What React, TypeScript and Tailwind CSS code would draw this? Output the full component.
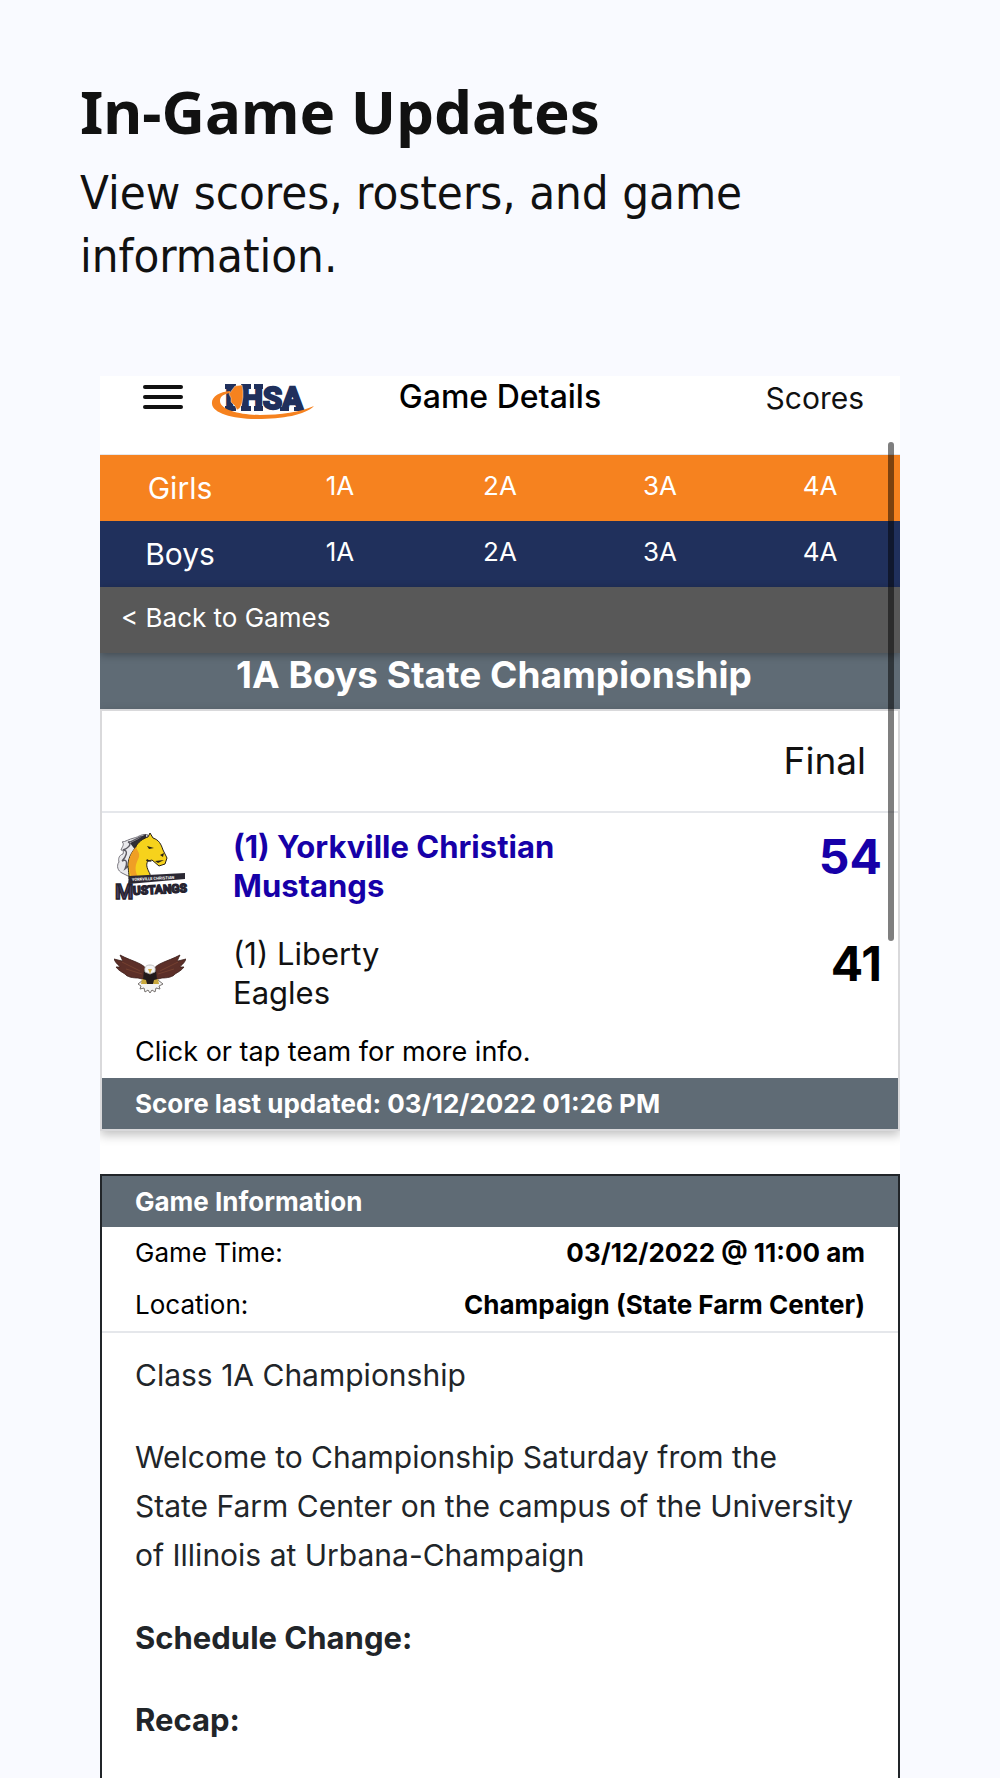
const divisions = ["1A", "2A", "3A", "4A"];

const leagues = [
  { name: "Girls", color: "bg-[#f6821f]" },
  { name: "Boys", color: "bg-[#20305c]" },
];

const gameInfo = [
  { label: "Game Time:", value: "03/12/2022 @ 11:00 am" },
  { label: "Location:", value: "Champaign (State Farm Center)" },
];

function IhsaLogo() {
  return (
    <svg viewBox="0 0 104 38" className="w-[104px] h-[38px] overflow-visible" role="img" aria-label="IHSA">
      <g
        fill="#20305c"
        stroke="#20305c"
        strokeWidth="2.4"
        fontSize="32"
        fontWeight="700"
        fontFamily="Roboto, sans-serif"
      >
        <text x="14" y="26">I</text>
        <text x="30" y="26" fontSize="31">
          HSA
        </text>
      </g>
      <path
        d="M14 1h11v5H14zM14 23h11v5H14zM30 1h10v5H30zM43 1h9v5h-9zM30 23h10v5H30zM43 23h9v5h-9zM69 24h9v4h-9zM83 24h9v4h-9z"
        fill="#20305c"
      />
      <path
        d="M19 8C8 9 0 14 1 21c1 9 20 15 45 15 26 0 48-4 57-13-13 6-34 9-54 9C30 32 9 27 9 18c0-5 4-7 10-8z"
        fill="#f6821f"
      />
      <path
        d="M24 3l7-1 1 6v6l-1 6-2 5-3 2-2-4-4-4 0-4-2-4 3-4z"
        fill="#f6821f"
        stroke="#fff"
        strokeWidth="0.4"
      />
    </svg>
  );
}

function MustangsLogo() {
  return (
    <svg viewBox="0 0 74 68" className="w-[74px] h-[68px] overflow-visible" role="img" aria-label="Mustangs">
      <path
        d="M34 2c-6-2-9 2-14 3-5 1-9 4-12 4 3 2 0 5-1 8 2 0 3 1 2 4-4 1-5 5-4 8-3 4-1 9 3 11l8 4 12-4V12z"
        fill="#e9e9ec"
        stroke="#77757d"
        strokeWidth="1"
      />
      <path
        d="M31 3c-8 0-10 6-17 6 5 2-1 7-5 8 6 0 3 7-1 11 6-3 5 4 3 8 5-3 6-9 11-12"
        fill="none"
        stroke="#5c5a62"
        strokeWidth="1.4"
      />
      <path d="M32 1l-8 5-8 4 3 4 4 5 9-9z" fill="#302e36" />
      <path
        d="M22 13c4-6 9-8 12-9l2-4 3 5c6 2 8 6 10 12l4 8-2 6-6 2-7-6-4 1c-3 4 0 9 2 13v5H15c0-7-1-10-1-15 1-8 4-12 8-17z"
        fill="#f6d21c"
        stroke="#272018"
        strokeWidth="1"
      />
      <path d="M22 14c-6 7-8 13-7 21l2 9h7c-5-9-1-15 1-20 1-5-2-6-3-10z" fill="#ef9f25" />
      <path d="M33 13l7 2-5 1zM46 22l4-2-1 4zM41 28l9-1-6 3zM33 26l5 3-6-1z" fill="#272018" />
      <path d="M15 43l56-3v6l-57 5z" fill="#2b2833" />
      <g fontWeight="700" fontFamily="Roboto, sans-serif">
        <text x="18" y="48" fontSize="4" fill="#fff" transform="rotate(-3 18 48)">
          YORKVILLE CHRISTIAN
        </text>
        <g fill="#4a4168" stroke="#25222e" strokeWidth="1.4">
          <text x="1" y="66" fontSize="21">
            M
          </text>
          <text x="19" y="62" fontSize="12" transform="rotate(-3 19 62)">
            USTANGS
          </text>
        </g>
      </g>
    </svg>
  );
}

function EaglesLogo() {
  const wing =
    "M34 18C31 9 19 8 6 1c2 4 3 6 2 6L0 5c2 5 5 6 6 8l-4 0c3 4 6 5 9 7 2 3 8 4 13 4l8 2z";
  return (
    <svg viewBox="0 0 72 40" className="w-[72px] h-10" role="img" aria-label="Eagles">
      <path d={wing} fill="#5c2f28" stroke="#3b1e1b" strokeWidth="0.8" />
      <path d={wing} transform="translate(72 0) scale(-1 1)" fill="#5c2f28" stroke="#3b1e1b" strokeWidth="0.8" />
      <path d="M8 8l18 9M12 15l16 5M64 8L46 17M60 15l-16 5" stroke="#74402f" strokeWidth="1" fill="none" />
      <path
        d="M29 26l-5 4 3 2-1 3 4-1 1 4 3-2 2 3 2-3 3 2 1-4 4 1-1-3 4-2-5-4z"
        fill="#f2f2f2"
        stroke="#77726f"
        strokeWidth="1"
      />
      <path d="M30 16l-1 10 4 4h6l4-4-1-10z" fill="#211a1b" />
      <path d="M31 18c-1-5 1-7 5-7s6 2 5 7l-5 2z" fill="#f5f5f5" stroke="#b0b0b0" strokeWidth="0.8" />
      <path d="M34 15h4l-2 5z" fill="#d9b54a" />
      <path d="M28 25l4 1 1 4-6 0zM44 25l-4 1-1 4 6 0z" fill="#c9a83c" />
    </svg>
  );
}

const teams = [
  { seed: "(1) Yorkville Christian", mascot: "Mustangs", score: 54, winner: true, logo: <MustangsLogo /> },
  { seed: "(1) Liberty", mascot: "Eagles", score: 41, winner: false, logo: <EaglesLogo /> },
];

function Header() {
  return (
    <header className="grid grid-cols-[1fr_auto_1fr] items-start h-[79px] px-9 bg-white border-b border-gray-200">
      <div className="flex items-start gap-7 pl-[7px] pt-[7px]">
        <button type="button" aria-label="Menu" className="flex flex-col gap-[6px] w-10 pt-[2px]">
          <span className="h-1 w-full rounded-full bg-[#111]" />
          <span className="h-1 w-full rounded-full bg-[#111]" />
          <span className="h-1 w-full rounded-full bg-[#111]" />
        </button>
        <IhsaLogo />
      </div>
      <h2 className="text-[32px] leading-[42px] font-medium text-black">Game Details</h2>
      <a href="#scores" className="justify-self-end pt-[2px] text-[30px] leading-10 text-[#111]">
        Scores
      </a>
    </header>
  );
}

function ScoreCard() {
  return (
    <section className="border-2 border-[#d9d9db] shadow-[0_4px_10px_rgba(0,0,0,0.25)]">
      <p className="h-[102px] pr-8 pt-[26px] text-right text-[37px] leading-[48px] text-[#111] border-b-2 border-gray-200">
        Final
      </p>
      <table className="w-full">
        <tbody>
          {teams.map((team) => (
            <tr key={team.mascot} className="h-[107px] align-top">
              <td className="w-[131px] pl-3">
                <div className="flex h-[107px] items-center">{team.logo}</div>
              </td>
              <td className="pt-[14px] text-[31px] leading-[39px]">
                <a href="#team" className={team.winner ? "block font-bold text-[#1600a8]" : "block text-[#111]"}>
                  {team.seed}
                  <br />
                  {team.mascot}
                </a>
              </td>
              <td
                className={
                  team.winner
                    ? "pt-[14px] pr-4 text-right text-5xl leading-[60px] font-bold text-[#1600a8]"
                    : "pt-[14px] pr-4 text-right text-5xl leading-[60px] font-bold text-black"
                }
              >
                {team.score}
              </td>
            </tr>
          ))}
        </tbody>
      </table>
      <p className="px-[33px] pt-[5px] pb-[6px] text-[27px] leading-10 text-black">Click or tap team for more info.</p>
      <p className="px-[33px] text-[26px] leading-[51px] font-bold text-white bg-[#5f6b75]">
        Score last updated: 03/12/2022 01:26 PM
      </p>
    </section>
  );
}

function GameInformation() {
  return (
    <section className="flex-1 mt-[43px] border-2 border-b-0 border-[#212529]">
      <h3 className="px-[33px] text-[26px] leading-[51px] font-bold text-white bg-[#5f6b75]">Game Information</h3>
      <table className="w-full text-[26px] leading-[52px] text-black border-b-2 border-gray-200">
        <tbody>
          {gameInfo.map((row) => (
            <tr key={row.label}>
              <th className="pl-[33px] text-left font-normal">{row.label}</th>
              <td className="pr-[33px] text-right font-bold">{row.value}</td>
            </tr>
          ))}
        </tbody>
      </table>
      <div className="flex flex-col gap-[33px] pl-[33px] pr-10 pt-[18px] text-[30px] leading-[49px] text-[#212529]">
        <p>Class 1A Championship</p>
        <p>
          Welcome to Championship Saturday from the State Farm Center on the campus of the University of Illinois at
          Urbana-Champaign
        </p>
        <p className="text-[31px] font-bold">Schedule Change:</p>
        <p className="text-[31px] font-bold">Recap:</p>
      </div>
    </section>
  );
}

export default function App() {
  return (
    <div className="flex flex-col min-h-screen bg-[#f9faff]">
      <div className="px-20 pt-[71px] h-[376px] text-[#111]">
        <h1 className="font-['Noto_Sans',sans-serif] text-[60px] leading-[80px] font-bold">In-Game Updates</h1>
        <p className="max-w-[700px] pt-[10px] font-['DejaVu_Sans_Condensed','DejaVu_Sans',sans-serif] text-[47px] leading-[63px]">
          View scores, rosters, and game information.
        </p>
      </div>

      <main className="relative flex flex-1 flex-col mx-[100px] overflow-hidden bg-white font-['Inter',sans-serif]">
        <Header />
        <nav>
          {leagues.map((league) => (
            <div key={league.name} className={`grid grid-cols-5 h-[66px] text-center text-white ${league.color}`}>
              <span className="text-[30px] leading-[66px]">{league.name}</span>
              {divisions.map((division) => (
                <a key={division} href="#games" className="text-[26px] leading-[62px]">
                  {division}
                </a>
              ))}
            </div>
          ))}
        </nav>
        <a
          href="#games"
          className="relative h-[66px] px-[21px] text-[26px] leading-[62px] text-white bg-[#585858] shadow-[0_2px_8px_rgba(0,0,0,0.3)]"
        >
          &lt; Back to Games
        </a>
        <h2 className="h-14 pr-3 text-center text-[37px] leading-[44px] font-bold text-white bg-[#5f6b75]">
          1A Boys State Championship
        </h2>
        <ScoreCard />
        <GameInformation />
        <div className="absolute top-[66px] right-[6px] h-[499px] w-[6px] rounded-full bg-black/50" />
      </main>
    </div>
  );
}
